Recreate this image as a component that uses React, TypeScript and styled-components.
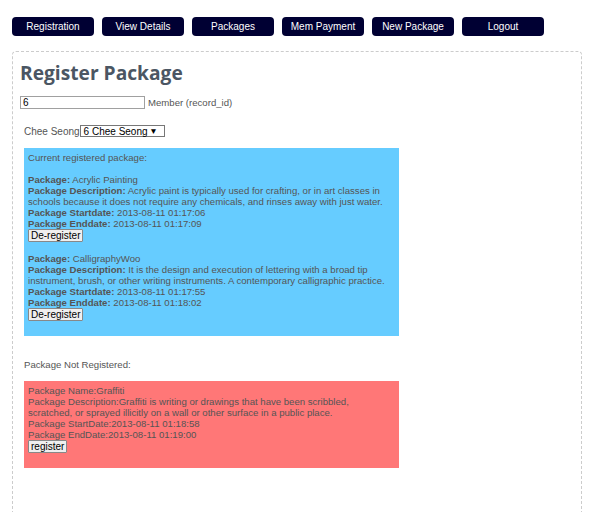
import React from 'react';
import styled, { createGlobalStyle } from 'styled-components';

const Global = createGlobalStyle`
  html, body { margin: 0; padding: 0; background: #fff; }
  body { font-family: "Liberation Sans", Arial, sans-serif; color: #555; }
`;

const Page = styled.div`
  padding: 17px 12px 0 12px;
`;

const Nav = styled.nav`
  display: flex;
  gap: 8px;
  margin-bottom: 15px;
`;

const NavButton = styled.a`
  width: 82px;
  height: 19px;
  display: flex;
  align-items: center;
  justify-content: center;
  background: #000033;
  color: #fff;
  border-radius: 4px;
  font-size: 10px;
  text-decoration: none;
`;

const Panel = styled.div`
  border: 1px dashed #ccc;
  border-radius: 4px;
  padding: 6px 7px 60px 7px;
  min-height: 440px;
`;

const Title = styled.h1`
  margin: 0;
  font-family: "Open Sans", "DejaVu Sans", sans-serif;
  font-weight: 700;
  font-size: 19.2px;
  line-height: 30px;
  color: #4b5663;
`;

const InputRow = styled.div`
  display: flex;
  align-items: center;
  gap: 3px;
  margin-top: 8px;
  font-size: 9.6px;
`;

const TextInput = styled.input`
  box-sizing: border-box;
  width: 125px;
  height: 13px;
  border: 1px solid #a0a0a0;
  padding: 0 2px;
  font-family: "Liberation Sans", Arial, sans-serif;
  font-size: 10px;
  color: #000;
  outline: none;
`;

const SelectRow = styled.div`
  display: flex;
  align-items: center;
  margin-top: 16px;
  padding-left: 4px;
  font-size: 10px;
`;

const FakeSelect = styled.span`
  box-sizing: border-box;
  display: inline-flex;
  align-items: center;
  justify-content: space-between;
  height: 12px;
  width: 85px;
  padding: 0 6px 0 3px;
  border: 1px solid #777;
  background: #fff;
  color: #000;
  font-size: 10px;
  white-space: nowrap;
`;

const Arrow = styled.span`
  font-size: 8.5px;
`;

const Box = styled.div<{ $bg: string }>`
  width: 375px;
  box-sizing: border-box;
  margin-left: 4px;
  background: ${(p) => p.$bg};
  padding: 4px 4px 15px 4px;
  font-size: 9.6px;
  line-height: 11px;
  color: #555;
`;

const BlueBox = styled(Box)`
  margin-top: 11px;
`;

const Line = styled.div``;

const Blank = styled.div`
  height: 11px;
`;

const Label = styled.b`
  font-weight: 700;
`;

const SmallButton = styled.button`
  display: block;
  height: 13px;
  padding: 0 2px;
  margin: 0;
  border: 1px solid #888;
  border-radius: 1px;
  background: #efefef;
  color: #000;
  font-family: "Liberation Sans", Arial, sans-serif;
  font-size: 10px;
  line-height: 11px;
`;

const Note = styled.div`
  margin: 23px 0 11px 4px;
  font-size: 9.6px;
  line-height: 11px;
`;

const registered = [
  {
    name: 'Acrylic Painting',
    desc: 'Acrylic paint is typically used for crafting, or in art classes in schools because it does not require any chemicals, and rinses away with just water.',
    start: '2013-08-11 01:17:06',
    end: '2013-08-11 01:17:09',
  },
  {
    name: 'CalligraphyWoo',
    desc: 'It is the design and execution of lettering with a broad tip instrument, brush, or other writing instruments. A contemporary calligraphic practice.',
    start: '2013-08-11 01:17:55',
    end: '2013-08-11 01:18:02',
  },
];

const navItems = ['Registration', 'View Details', 'Packages', 'Mem Payment', 'New Package', 'Logout'];

export default function App() {
  return (
    <>
      <Global />
      <Page>
        <Nav>
          {navItems.map((n) => (
            <NavButton key={n} href="#">{n}</NavButton>
          ))}
        </Nav>
        <Panel>
          <Title>Register Package</Title>
          <InputRow>
            <TextInput defaultValue="6" />
            <span>Member (record_id)</span>
          </InputRow>
          <SelectRow>
            <span>Chee Seong</span>
            <FakeSelect>
              <span>6 Chee Seong</span>
              <Arrow>▼</Arrow>
            </FakeSelect>
          </SelectRow>
          <BlueBox $bg="#66ccff">
            <Line>Current registered package:</Line>
            <Blank />
            {registered.map((p, i) => (
              <React.Fragment key={p.name}>
                {i > 0 && <Blank />}
                <Line><Label>Package:</Label> {p.name}</Line>
                <Line><Label>Package Description:</Label> {p.desc}</Line>
                <Line><Label>Package Startdate:</Label> {p.start}</Line>
                <Line><Label>Package Enddate:</Label> {p.end}</Line>
                <SmallButton>De-register</SmallButton>
              </React.Fragment>
            ))}
          </BlueBox>
          <Note>Package Not Registered:</Note>
          <Box $bg="#ff7777">
            <Line>Package Name:Graffiti</Line>
            <Line>Package Description:Graffiti is writing or drawings that have been scribbled, scratched, or sprayed illicitly on a wall or other surface in a public place.</Line>
            <Line>Package StartDate:2013-08-11 01:18:58</Line>
            <Line>Package EndDate:2013-08-11 01:19:00</Line>
            <SmallButton>register</SmallButton>
          </Box>
        </Panel>
      </Page>
    </>
  );
}
